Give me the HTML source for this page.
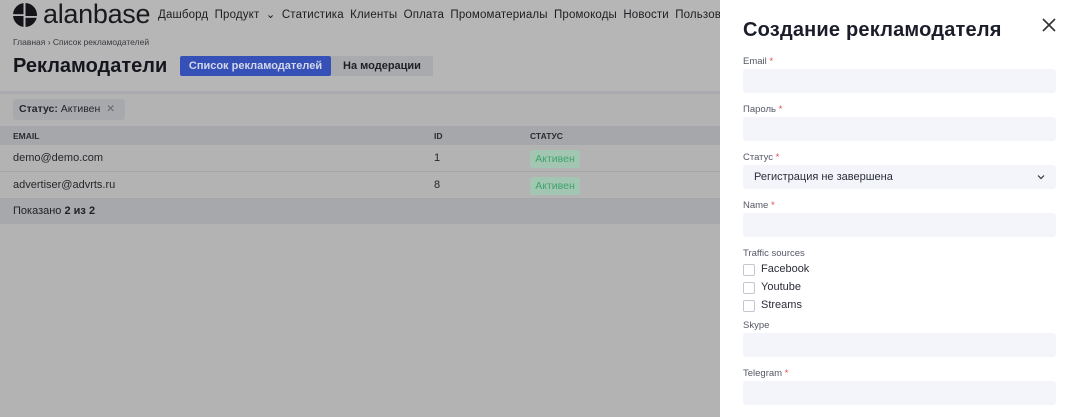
<!DOCTYPE html>
<html><head><meta charset="utf-8"><style>
*{margin:0;padding:0;box-sizing:border-box}
body{width:1080px;height:417px;overflow:hidden;font-family:"Liberation Sans",sans-serif;background:#b3b3b3;position:relative}
.l{position:absolute;left:0;top:0;width:720px;height:417px}
.top{position:absolute;left:0;top:0;width:720px;height:93px;background:#b6b6b6}
.nav{position:absolute;top:7px;left:158px;font-size:11.5px;color:#1e1e22;white-space:nowrap;word-spacing:3px;letter-spacing:.15px}
.logo{position:absolute;left:12px;top:2px}
.brand{position:absolute;left:43px;top:-1px;font-size:27px;color:#1a1a1e;letter-spacing:-.3px}
.bc{position:absolute;left:13px;top:37px;font-size:8.5px;color:#3a3a40}
h1{position:absolute;left:13px;top:55px;font-size:20px;font-weight:bold;color:#15161c}
.tab1{position:absolute;left:180px;top:56px;width:151px;height:20px;background:#3551b8;color:#d3d7e8;font-size:11px;font-weight:bold;line-height:20px;text-align:center;border-radius:2px}
.tab2{position:absolute;left:331px;top:56px;width:102px;height:20px;background:#a9aaae;color:#1e1e24;font-size:11px;font-weight:bold;line-height:20px;text-align:center}
.sep{position:absolute;left:0;top:91px;width:720px;height:3px;background:#aaabae}
.chip{position:absolute;left:13px;top:99px;width:112px;height:21px;background:#a8a9ad;border-radius:3px;font-size:10.5px;line-height:21px;padding-left:6px;color:#25262c}
.th{position:absolute;left:0;top:126px;width:720px;height:19px;background:#a6a7ab;font-size:8.5px;font-weight:bold;color:#2a2b31}
.row{position:absolute;left:0;width:720px;height:27px;background:#b3b3b3;border-bottom:1px solid #a6a6a8;font-size:11px;color:#25262b}
.badge{position:absolute;left:530px;top:5px;width:50px;height:18px;background:#a3c6b3;color:#3fa36c;font-size:10.5px;line-height:18px;text-align:center;border-radius:3px}
.foot{position:absolute;left:0;top:199px;width:720px;height:25px;background:#a7a8ac;font-size:11px;line-height:25px;padding-left:13px;color:#222}
.p{position:absolute;left:720px;top:0;width:360px;height:417px;background:#fff}
.p h2{position:absolute;left:23px;top:19px;font-size:20px;font-weight:bold;color:#1c1d2b;letter-spacing:.2px}
.lb{position:absolute;left:23px;font-size:9.5px;color:#555867}
.lb b{color:#e5484d;font-weight:normal}
.in{position:absolute;left:23px;width:313px;height:24px;background:#f4f5fa;border-radius:3px}
.cb{position:absolute;left:23px;width:12px;height:12px;border:1px solid #c4c6cf;border-radius:2px}
.ct{position:absolute;left:41px;font-size:11px;color:#2b2d3a}
</style></head><body>
<div class="l">
<div class="top"></div>
<svg class="logo" width="26" height="26" viewBox="0 0 26 26"><circle cx="13" cy="13" r="12" fill="#151519"/><rect x="11.5" y="0" width="2" height="26" fill="#b6b6b6"/><rect x="0" y="12.2" width="11.5" height="1.8" fill="#b6b6b6"/><rect x="13.5" y="14" width="13" height="1.8" fill="#b6b6b6"/></svg>
<div class="brand">alanbase</div>
<div class="nav">Дашборд Продукт ⌄ Статистика Клиенты Оплата Промоматериалы Промокоды Новости Пользов</div>
<div class="bc">Главная › Список рекламодателей</div>
<h1>Рекламодатели</h1>
<div class="tab1">Список рекламодателей</div>
<div class="tab2">На модерации</div>
<div class="sep"></div>
<div class="chip"><b>Статус:</b> Активен <span style="color:#666;margin-left:3px">✕</span></div>
<div class="th"><span style="position:absolute;left:13px;top:5px">EMAIL</span><span style="position:absolute;left:434px;top:5px">ID</span><span style="position:absolute;left:530px;top:5px">СТАТУС</span></div>
<div class="row" style="top:145px"><span style="position:absolute;left:13px;top:7px">demo@demo.com</span><span style="position:absolute;left:434px;top:7px">1</span><div class="badge">Активен</div></div>
<div class="row" style="top:172px"><span style="position:absolute;left:13px;top:7px">advertiser@advrts.ru</span><span style="position:absolute;left:434px;top:7px">8</span><div class="badge">Активен</div></div>
<div class="foot">Показано <b>2 из 2</b></div>
</div>
<div class="p">
<h2>Создание рекламодателя</h2>
<svg style="position:absolute;left:322px;top:18px" width="14" height="14" viewBox="0 0 14 14"><path d="M1 1L13 13M13 1L1 13" stroke="#333" stroke-width="1.6"/></svg>
<div class="lb" style="top:56px">Email <b>*</b></div><div class="in" style="top:69px"></div>
<div class="lb" style="top:104px">Пароль <b>*</b></div><div class="in" style="top:117px"></div>
<div class="lb" style="top:152px">Статус <b>*</b></div><div class="in" style="top:165px"><span style="position:absolute;left:11px;top:6px;font-size:11px;color:#2b2d3a">Регистрация не завершена</span><svg style="position:absolute;right:11px;top:9px" width="8" height="6" viewBox="0 0 8 6"><path d="M1 1.5L4 4.5L7 1.5" stroke="#333" stroke-width="1.2" fill="none"/></svg></div>
<div class="lb" style="top:200px">Name <b>*</b></div><div class="in" style="top:213px"></div>
<div class="lb" style="top:248px">Traffic sources</div>
<div class="cb" style="top:264px"></div><div class="ct" style="top:263px">Facebook</div>
<div class="cb" style="top:282px"></div><div class="ct" style="top:281px">Youtube</div>
<div class="cb" style="top:300px"></div><div class="ct" style="top:299px">Streams</div>
<div class="lb" style="top:320px">Skype</div><div class="in" style="top:333px"></div>
<div class="lb" style="top:368px">Telegram <b>*</b></div><div class="in" style="top:381px"></div>
</div>
</body></html>
